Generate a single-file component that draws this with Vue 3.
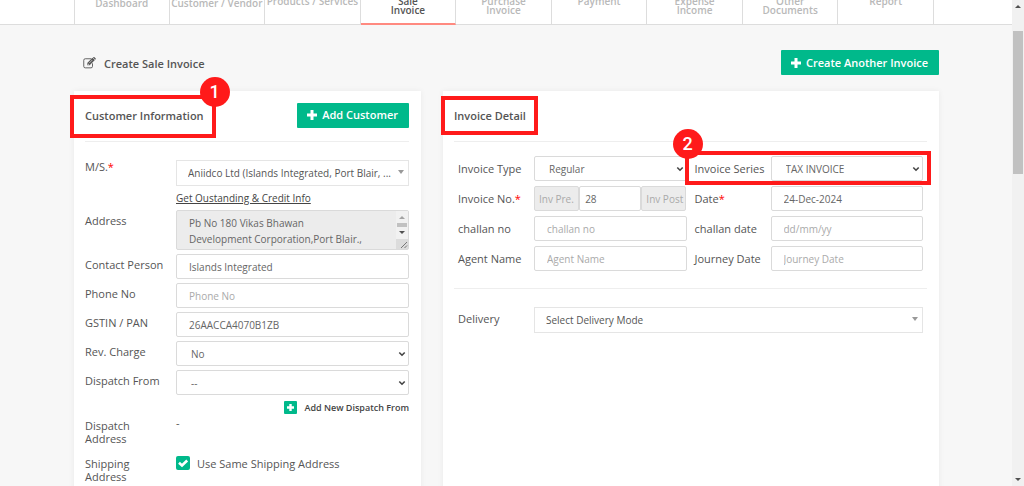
<script setup>
import { ref } from 'vue'

const tabs = [
  { lines: ['Dashboard'], low: true },
  { lines: ['Customer / Vendor'], low: true },
  { lines: ['Products / Services'] },
  { lines: ['Sale', 'Invoice'], active: true },
  { lines: ['Purchase', 'Invoice'] },
  { lines: ['Payment'] },
  { lines: ['Expense', 'Income'] },
  { lines: ['Other', 'Documents'] },
  { lines: ['Report'] }
]

const address = ref('Pb No 180 Vikas Bhawan\nDevelopment Corporation,Port Blair.,\nAndaman Nicobar Islands, India')
const contact = ref('Islands Integrated')
const phone = ref('')
const gstin = ref('26AACCA4070B1ZB')
const sameShipping = ref(true)
const invoiceNo = ref('28')
const date = ref('24-Dec-2024')
</script>

<template>
  <div class="shell">
    <div class="page">
      <nav class="nav">
        <ul class="container tabs">
          <li v-for="t in tabs" :key="t.lines.join()" :class="{ active: t.active, low: t.low }">
            <a href="#"><span v-for="l in t.lines" :key="l">{{ l }}</span></a>
          </li>
        </ul>
      </nav>

      <main class="container">
        <div class="title-bar">
          <h1>
            <svg class="edit" viewBox="0 0 26 24" aria-hidden="true">
              <path d="M19 13.5v5.2a3 3 0 0 1-3 3H4.500a3 3 0 0 1-3-3V6.500a3 3 0 0 1 3-3H16" fill="none" stroke="#555" stroke-width="1.800" stroke-linecap="round" />
              <path d="M8.500 16.700v-4.700L19 1.500l4.700 4.700L13.200 16.700z" fill="#555" />
              <path d="M10 13v2.300h2.300M12.500 12l6-6" fill="none" stroke="#f7f7f7" stroke-width="1.200" />
              <path d="M20 1l1-.8q1-.6 2 .3l2 2q1 1 .3 2l-.8 1z" fill="#555" />
            </svg>
            Create Sale Invoice
          </h1>
          <button type="button" class="btn">
            <svg class="plus" viewBox="0 0 10 10" aria-hidden="true"><path d="M3.500 0h3v3.500H10v3H6.500V10h-3V6.500H0v-3h3.500z" fill="#fff" /></svg>
            Create Another Invoice
          </button>
        </div>

        <div class="cards">
          <section class="card">
            <header>
              <h2 class="marked first">Customer Information<i class="badge">1</i></h2>
              <button type="button" class="btn">
                <svg class="plus" viewBox="0 0 10 10" aria-hidden="true"><path d="M3.500 0h3v3.500H10v3H6.500V10h-3V6.500H0v-3h3.500z" fill="#fff" /></svg>
                Add Customer
              </button>
            </header>

            <div class="customer">
              <label for="ms" class="top">M/S.<b>*</b></label>
              <div class="pick light">
                <select id="ms"><option>Aniidco Ltd (Islands Integrated, Port Blair, ...</option></select>
                <svg viewBox="0 0 6 4" class="tri"><path d="M0 0h6L3 4z" fill="#999" /></svg>
              </div>
              <a href="#" class="info">Get Oustanding &amp; Credit Info</a>

              <label for="address">Address</label>
              <div class="area">
                <textarea id="address" v-model="address" readonly></textarea>
                <svg class="bar" viewBox="0 0 12 38" aria-hidden="true">
                  <path d="M0 0h12v38H0z" fill="#f1f1f1" />
                  <path d="M3 8h6L6 5z" fill="#a3a3a3" />
                  <path d="M1 12h10v4H1z" fill="#c1c1c1" />
                  <path d="M3 20h6l-3 3z" fill="#505050" />
                  <path d="M0 28h12v10H0z" fill="#dcdcdc" />
                  <path d="M5 37l6-6M8.500 37l2.500-2.500" stroke="#777" stroke-width="1" />
                </svg>
              </div>

              <label for="contact">Contact Person</label>
              <input id="contact" v-model="contact" type="text" />

              <label for="phone">Phone No</label>
              <input id="phone" v-model="phone" type="text" placeholder="Phone No" />

              <label for="gstin">GSTIN / PAN</label>
              <input id="gstin" v-model="gstin" type="text" />

              <label for="rev">Rev. Charge</label>
              <div class="pick native">
                <select id="rev"><option>No</option><option>Yes</option></select>
                <svg viewBox="0 0 8 6" class="chev"><path d="M1.300 1.500L4 4.200l2.700-2.700" fill="none" stroke="#444" stroke-width="1.600" /></svg>
              </div>

              <label for="from">Dispatch From</label>
              <div class="pick native">
                <select id="from"><option>--</option></select>
                <svg viewBox="0 0 8 6" class="chev"><path d="M1.300 1.500L4 4.200l2.700-2.700" fill="none" stroke="#444" stroke-width="1.600" /></svg>
              </div>

              <button type="button" class="add">
                <svg viewBox="0 0 13 13" aria-hidden="true"><rect width="13" height="13" rx="1" fill="#00b98b" /><path d="M5.300 3h2.400v2.300H10v2.400H7.700V10H5.300V7.700H3V5.300h2.300z" fill="#fff" /></svg>
                Add New Dispatch From
              </button>

              <span class="label">Dispatch Address</span>
              <span class="value">-</span>

              <span class="label ship">Shipping Address</span>
              <label class="check">
                <input v-model="sameShipping" type="checkbox" />
                <svg viewBox="0 0 14 14" aria-hidden="true"><path d="M3 6.800l3 2.700 5.200-5" fill="none" stroke="#fff" stroke-width="2.600" /></svg>
                Use Same Shipping Address
              </label>
            </div>
          </section>

          <section class="card">
            <header>
              <h2 class="marked second">Invoice Detail</h2>
            </header>

            <div class="detail">
              <div class="pair">
                <label for="type">Invoice Type</label>
                <div class="pick native">
                  <select id="type"><option>Regular</option></select>
                  <svg viewBox="0 0 8 6" class="chev"><path d="M1.300 1.500L4 4.200l2.700-2.700" fill="none" stroke="#444" stroke-width="1.600" /></svg>
                </div>
              </div>
              <div class="pair marked third">
                <label for="series">Invoice Series</label>
                <div class="pick native">
                  <select id="series"><option>TAX INVOICE</option></select>
                  <svg viewBox="0 0 8 6" class="chev"><path d="M1.300 1.500L4 4.200l2.700-2.700" fill="none" stroke="#444" stroke-width="1.600" /></svg>
                </div>
                <i class="badge">2</i>
              </div>

              <div class="pair">
                <label for="number">Invoice No.<b>*</b></label>
                <div class="group">
                  <input type="text" placeholder="Inv Pre." aria-label="Invoice prefix" readonly />
                  <input id="number" v-model="invoiceNo" type="text" />
                  <input type="text" placeholder="Inv Post" aria-label="Invoice postfix" readonly />
                </div>
              </div>
              <div class="pair">
                <label for="date">Date<b>*</b></label>
                <input id="date" v-model="date" type="text" />
              </div>

              <div class="pair">
                <label for="challan">challan no</label>
                <input id="challan" type="text" placeholder="challan no" />
              </div>
              <div class="pair">
                <label for="chdate">challan date</label>
                <input id="chdate" type="text" placeholder="dd/mm/yy" />
              </div>

              <div class="pair">
                <label for="agent">Agent Name</label>
                <input id="agent" type="text" placeholder="Agent Name" />
              </div>
              <div class="pair">
                <label for="journey">Journey Date</label>
                <input id="journey" type="text" placeholder="Journey Date" />
              </div>
            </div>

            <div class="delivery">
              <label for="delivery">Delivery</label>
              <div class="pick light">
                <select id="delivery"><option>Select Delivery Mode</option></select>
                <svg viewBox="0 0 6 4" class="tri"><path d="M0 0h6L3 4z" fill="#999" /></svg>
              </div>
            </div>
          </section>
        </div>
      </main>
    </div>

    <div class="scroll" aria-hidden="true">
      <svg viewBox="0 0 6 4"><path d="M0 4h6L3 1z" fill="#505050" /></svg>
      <div class="track"><div class="thumb"></div></div>
      <svg viewBox="0 0 6 4"><path d="M0 0h6L3 3z" fill="#505050" /></svg>
    </div>
  </div>
</template>

<style>
body {
  margin: 0;
}
</style>

<style scoped>
* {
  box-sizing: border-box;
}
.shell {
  display: grid;
  grid-template-columns: 1fr 12px;
  height: 100vh;
  overflow: hidden;
  background: #f7f7f7;
  font-family: "Open Sans", "Noto Sans", sans-serif;
  font-size: 11px;
  color: #555;
}
.page {
  min-width: 0;
  overflow: hidden;
}
.container {
  max-width: 866px;
  margin: 0 auto;
  padding-left: 1px;
}
.nav {
  margin-top: -40px;
  background: #fff;
  border-bottom: 1px solid #ddd;
}
.tabs {
  display: grid;
  grid-template-columns: repeat(9, 1fr);
  height: 64px;
  padding: 0 5px 0 1px;
  list-style: none;
}
.tabs li {
  border-right: 1px solid #ddd;
  padding-top: 37px;
}
.tabs li:first-child {
  border-left: 1px solid #ddd;
}
.tabs .low {
  padding-top: 39px;
}
.tabs .active {
  border-bottom: 2px solid #ff8a80;
  margin-bottom: -1px;
}
.tabs a {
  display: flex;
  flex-direction: column;
  align-items: center;
  font-size: 10px;
  line-height: 9px;
  font-weight: 600;
  color: #b9b9b9;
  text-decoration: none;
  white-space: nowrap;
}
.tabs .active a {
  color: #555;
}
.title-bar {
  display: flex;
  justify-content: space-between;
  align-items: center;
  margin: 25px 0 16px;
}
h1,
h2 {
  margin: 0;
  font-size: 11px;
  line-height: 15px;
  font-weight: 600;
}
h1 {
  display: flex;
  align-items: center;
  gap: 8px;
  padding: 1px 0 0 9px;
}
.edit {
  width: 13px;
  height: 12px;
}
.btn {
  display: flex;
  align-items: center;
  gap: 5px;
  height: 25px;
  padding: 0 11px 0 10px;
  border: 0;
  border-radius: 1px;
  background: #00b98b;
  color: #fff;
  font: 600 11px/16px "Open Sans", "Noto Sans", sans-serif;
}
.plus {
  width: 10px;
  height: 10px;
}
.cards {
  display: grid;
  grid-template-columns: 347fr 496fr;
  gap: 22px;
}
.card {
  min-height: 440px;
  padding: 0 12px 0 11px;
  background: #fff;
  box-shadow: 0 0 6px rgba(0, 0, 0, 0.06);
}
.card header {
  display: flex;
  justify-content: space-between;
  align-items: center;
  height: 51px;
  padding-bottom: 2px;
  border-bottom: 1px solid #eee;
}
.marked {
  position: relative;
}
.marked::after {
  content: "";
  position: absolute;
  border: 4px solid #ff1a1a;
  pointer-events: none;
}
.first::after {
  inset: -13px -12px -15px -15px;
}
.second::after {
  inset: -12px -12px -12px -13px;
}
.third::after {
  inset: -5px -8px -4px -10px;
}
.badge {
  position: absolute;
  z-index: 1;
  width: 30px;
  height: 30px;
  border-radius: 50%;
  background: #ff1a1a;
  color: #fff;
  font: 500 18px/29px Roboto, sans-serif;
  text-align: center;
}
.first .badge {
  top: -31px;
  right: -26px;
}
.third .badge {
  top: -27px;
  left: -22px;
}
label,
.label {
  line-height: 13px;
}
label b {
  color: #f00;
  font-weight: 400;
}
input,
select,
textarea {
  display: block;
  width: 100%;
  min-width: 0;
  height: 25px;
  margin: 0;
  padding: 0 12px;
  border: 1px solid #dadada;
  border-radius: 2px;
  outline: 0;
  background: #fff;
  color: #666;
  font: 10px/15px "Open Sans", "Noto Sans", sans-serif;
}
input::placeholder {
  color: #aaa;
  opacity: 1;
}
select {
  appearance: none;
}
.native select {
  padding: 1px 14px 0;
}
.light select {
  height: 26px;
  padding: 0 11px;
  border-color: #e5e5e5;
  border-radius: 0;
  color: #555;
}
.pick {
  position: relative;
}
.chev,
.tri {
  position: absolute;
  pointer-events: none;
}
.chev {
  top: 10px;
  right: 3px;
  width: 8px;
  height: 6px;
}
.tri {
  top: 10px;
  right: 5px;
  width: 6px;
  height: 4px;
}
.customer {
  display: grid;
  grid-template-columns: 91px 1fr;
  row-gap: 4px;
  padding-top: 18px;
}
.customer > label {
  padding-top: 4px;
}
.customer > .top {
  padding-top: 0;
}
.info {
  grid-column: 2;
  padding-top: 1px;
  color: #444;
  font-size: 10px;
  line-height: 15px;
}
.area {
  position: relative;
}
.area textarea {
  height: 40px;
  padding-top: 4px;
  line-height: 16px;
  background: #ececec;
  overflow: hidden;
  resize: none;
}
.bar {
  position: absolute;
  top: 1px;
  right: 1px;
  width: 12px;
  height: 38px;
}
.add {
  grid-column: 2;
  justify-self: end;
  display: flex;
  align-items: center;
  gap: 7px;
  margin: 2px 0 1px;
  padding: 0;
  border: 0;
  background: none;
  color: #444;
  font: 600 9px/13px "Open Sans", "Noto Sans", sans-serif;
}
.add svg {
  width: 13px;
  height: 13px;
}
.label {
  width: 60px;
}
.value {
  line-height: 7px;
}
.ship {
  padding-top: 8px;
}
.customer .check {
  position: relative;
  display: flex;
  align-items: center;
  align-self: start;
  gap: 7px;
  padding-top: 7px;
}
.check input {
  appearance: none;
  width: 14px;
  height: 14px;
  padding: 0;
  border: 0;
  background: #00b98b;
}
.check svg {
  position: absolute;
  left: 0;
  width: 14px;
  height: 14px;
}
.detail {
  display: grid;
  grid-template-columns: 1fr 1fr;
  gap: 5px 8px;
  padding: 14px 4px 17px;
  border-bottom: 1px solid #eee;
}
.pair,
.delivery {
  display: grid;
  grid-template-columns: 76px 1fr;
  align-items: center;
}
.delivery {
  padding: 18px 4px;
}
.delivery label {
  padding-bottom: 4px;
}
.group {
  display: grid;
  grid-template-columns: 45fr 62fr 45fr;
}
.group input {
  padding: 0 5px;
}
.group input:read-only {
  padding: 0 0 0 4px;
  background: #ececec;
}
.scroll {
  display: flex;
  flex-direction: column;
  align-items: center;
  padding: 4px 0;
  background: #f1f1f1;
}
.scroll svg {
  width: 6px;
  height: 4px;
}
.track {
  flex: 1;
  width: 10px;
  padding-top: 23px;
}
.thumb {
  height: 32%;
  background: #c1c1c1;
}
</style>
